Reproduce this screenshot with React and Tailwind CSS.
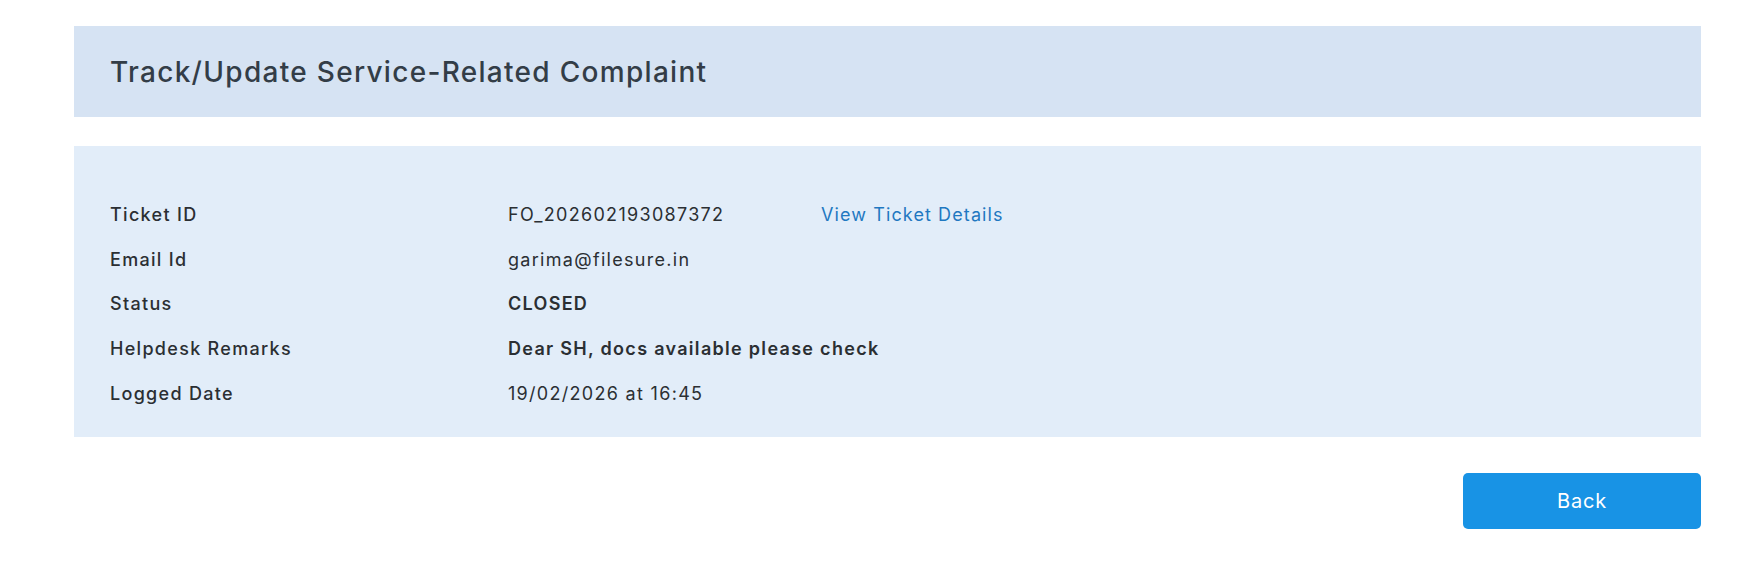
import React from "react";

const rows = [
  { label: "Ticket ID", value: "FO_202602193087372", link: true },
  { label: "Email Id", value: "garima@filesure.in" },
  { label: "Status", value: "CLOSED", bold: true },
  { label: "Helpdesk Remarks", value: "Dear SH, docs available please check", bold: true },
  { label: "Logged Date", value: "19/02/2026 at 16:45" },
];

export default function App() {
  return (
    <div className="w-[1743px] h-[584px] bg-white pl-[74px] pt-[26px] font-['Inter',sans-serif]">
      <div className="w-[1627px]">
        <div className="h-[91px] bg-[#d6e3f3] flex items-center pl-[36px]">
          <h1 className="text-[28px] font-medium text-[#333d47] tracking-[1.3px]">
            Track/Update Service-Related Complaint
          </h1>
        </div>
        <div className="mt-[29px] bg-[#e2edf9] pt-[46px] pb-[21px] pl-[36px]">
          {rows.map((r) => (
            <div key={r.label} className="h-[44.75px] flex items-center whitespace-nowrap text-[18px] text-[#2b2f33] tracking-[1.3px]">
              <div className="w-[398px] shrink-0 font-medium">{r.label}</div>
              <div className={`w-[313px] shrink-0 ${r.bold ? "font-semibold" : "font-normal"}`}>{r.value}</div>
              {r.link && (
                <a className="text-[#1f78c1] font-normal cursor-pointer tracking-[1.1px]">View Ticket Details</a>
              )}
            </div>
          ))}
        </div>
        <div className="flex justify-end mt-[36px]">
          <button className="w-[238px] h-[56px] rounded-[5px] bg-[#1893e5] text-white text-[20px] font-normal tracking-[0.8px]">
            Back
          </button>
        </div>
      </div>
    </div>
  );
}
